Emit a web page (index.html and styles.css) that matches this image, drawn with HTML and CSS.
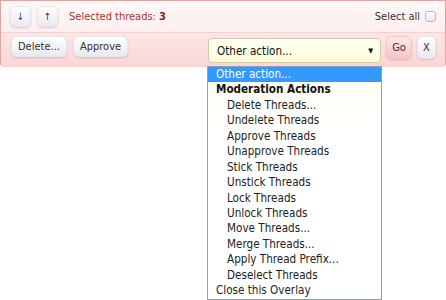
FILE: index.html
```html
<!DOCTYPE html>
<html lang="en">

<head>
    <meta charset="UTF-8">
    <title>Inline Moderation</title>
    <link rel="stylesheet" href="styles.css">
</head>

<body>
    <div class="inline-mod">
        <div class="mod-top">
            <div class="mod-left">
                <button class="btn btn-small">&#8595;</button>
                <button class="btn btn-small">&#8593;</button>
                <span class="selected">Selected threads: <b>3</b></span>
            </div>
            <label class="select-all">Select all <span class="checkbox"></span></label>
        </div>

        <div class="mod-bottom">
            <div class="mod-left">
                <button class="btn">Delete...</button>
                <button class="btn">Approve</button>
            </div>
            <div class="mod-right">
                <div class="select-wrap">
                    <div class="select-box">
                        <span>Other action...</span>
                        <span class="arrow">&#9660;</span>
                    </div>
                    <ul class="select-list">
                        <li class="active">Other action...</li>
                        <li class="group">Moderation Actions</li>
                        <li class="sub">Delete Threads...</li>
                        <li class="sub">Undelete Threads</li>
                        <li class="sub">Approve Threads</li>
                        <li class="sub">Unapprove Threads</li>
                        <li class="sub">Stick Threads</li>
                        <li class="sub">Unstick Threads</li>
                        <li class="sub">Lock Threads</li>
                        <li class="sub">Unlock Threads</li>
                        <li class="sub">Move Threads...</li>
                        <li class="sub">Merge Threads...</li>
                        <li class="sub">Apply Thread Prefix...</li>
                        <li class="sub">Deselect Threads</li>
                        <li>Close this Overlay</li>
                    </ul>
                </div>
                <button class="btn btn-go">Go</button>
                <button class="btn btn-x">X</button>
            </div>
        </div>
    </div>
</body>

</html>
```

FILE: styles.css
```css
html,
body {
    min-height: 300px;
}

body {
    margin: 0;
    background-color: #fff;
    font-family: "DejaVu Sans", sans-serif;
    font-stretch: condensed;
    font-size: 11px;
    color: #222;
}

.inline-mod {
    border: 1px solid #e4a2a2;
    height: 63px;
    position: relative;
}

.mod-top {
    height: 31px;
    display: flex;
    align-items: center;
    justify-content: space-between;
    padding: 0 9px;
    background: linear-gradient(#fff8f8, #fdeeee);
    border-bottom: 1px solid #f4d0d0;
}

.mod-bottom {
    height: 31px;
    display: flex;
    align-items: flex-start;
    justify-content: space-between;
    padding: 3px 9px 0 10px;
    background: linear-gradient(#fde6e6, #fbd5d5);
}

.mod-left {
    display: flex;
    align-items: center;
    gap: 6px;
}

.mod-right {
    display: flex;
    align-items: flex-start;
    gap: 5px;
}

.btn {
    font-family: inherit;
    font-stretch: condensed;
    font-size: 11px;
    color: #333;
    height: 21px;
    padding: 0 6px;
    border: 1px solid #e6e6ee;
    border-radius: 6px;
    background: linear-gradient(#ffffff, #e9e9f1);
    box-shadow: 0 1px 2px rgba(150, 120, 120, 0.35);
    cursor: pointer;
}

.btn-small {
    width: 21px;
    padding: 0;
    font-size: 10px;
}

.selected {
    margin-left: 5px;
    color: #a53535;
}

.selected b {
    color: #8a2020;
}

.select-all {
    display: flex;
    align-items: center;
    gap: 5px;
    color: #333;
}

.checkbox {
    width: 9px;
    height: 9px;
    border: 1px solid #b8b8c4;
    border-radius: 3px;
    background: linear-gradient(#fff, #e6e6ee);
}

.select-wrap {
    position: relative;
    width: 173px;
    margin-top: 2px;
}

.select-box {
    height: 25px;
    box-sizing: border-box;
    border: 1px solid #d8c8a8;
    border-radius: 4px;
    background: linear-gradient(#fffff4, #fefdd8);
    display: flex;
    align-items: center;
    justify-content: space-between;
    padding: 0 7px 0 8px;
    font-size: 11.6px;
    color: #111;
}

.arrow {
    font-size: 7px;
}

.select-list {
    position: absolute;
    top: 28px;
    left: -1px;
    width: 175px;
    box-sizing: border-box;
    margin: 0;
    padding: 0;
    list-style: none;
    border: 1px solid #8aa2b8;
    background: linear-gradient(#fffef2, #ffffff 30%);
    z-index: 2;
}

.select-list li {
    height: 15.45px;
    line-height: 15px;
    padding-left: 8px;
    font-size: 11.6px;
    color: #222;
}

.select-list li.active {
    background-color: #3399ff;
    color: #fff;
}

.select-list li.group {
    font-weight: bold;
    color: #111;
}

.select-list li.sub {
    padding-left: 19px;
}

.btn-go {
    width: 26px;
    height: 23px;
    padding: 0;
    border-color: #f0c8c8;
    background: linear-gradient(#fde8e8, #f6c4c4);
}

.btn-x {
    width: 19px;
    height: 23px;
    padding: 0;
}
```
